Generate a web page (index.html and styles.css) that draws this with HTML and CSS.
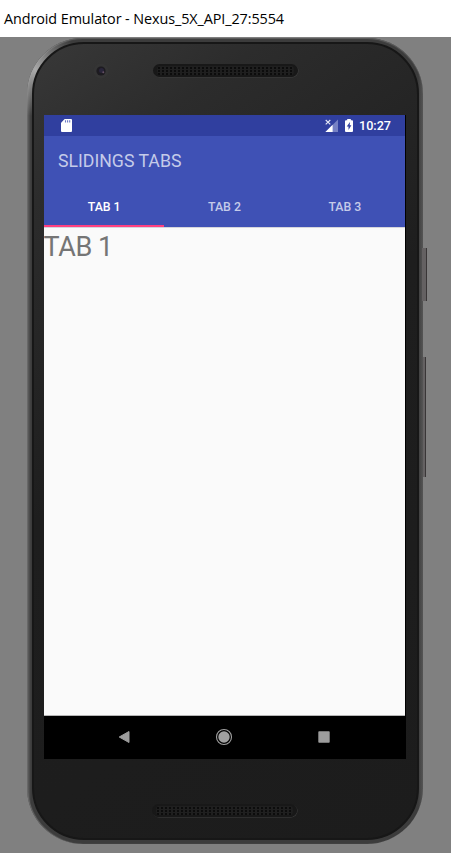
FILE: index.html
```html
<!DOCTYPE html>
<html lang="en">
<head>
<meta charset="utf-8">
<title>Android Emulator</title>
<link rel="stylesheet" href="styles.css">
</head>
<body>
<header class="titlebar"><span>Android Emulator - Nexus_5X_API_27:5554</span></header>
<main class="stage">
  <div class="phone">
    <i class="side-button power"></i>
    <i class="side-button volume"></i>
    <div class="face">
      <div class="forehead">
        <svg class="camera" width="16" height="16" viewBox="0 0 16 16"><circle cx="8" cy="8" r="7.6" fill="#353535"/><circle cx="8" cy="8" r="4.6" fill="#1d1b20"/><circle cx="8.5" cy="7.5" r="2.5" fill="#29253a"/><circle cx="10.3" cy="9.2" r="1" fill="#665064"/></svg>
        <div class="speaker"></div>
      </div>
      <div class="screen">
        <div class="status">
          <svg class="sd" width="11" height="13" viewBox="0 0 11 13"><path fill="#fff" d="M3.7 0H10a1 1 0 0 1 1 1v11a1 1 0 0 1-1 1H1a1 1 0 0 1-1-1V3.7z"/><path stroke="#6b78c4" stroke-width="1.1" d="M4.5 1.2v2.4M6.6 1.2v2.4M8.7 1.2v2.4"/></svg>
          <svg class="signal" width="13" height="13" viewBox="0 0 13 13"><path fill="#7681c4" d="M13 .5V13H7V6.5z"/><path fill="#fff" d="M7.6 5.700V13H.3z"/><path stroke="#e5e8f6" stroke-width="1.1" d="M.7 1l4.6 4.4M5.3 1L.7 5.4"/></svg>
          <svg class="battery" width="8" height="13" viewBox="0 0 8 13"><path fill="#fff" d="M2.2 0h3.6v1.2H7a1 1 0 0 1 1 1V12a1 1 0 0 1-1 1H1a1 1 0 0 1-1-1V2.200a1 1 0 0 1 1-1h1.200z"/><path fill="#303f9f" d="M5 3L1.700 7.600h1.800v3.400l2.900-4.700h-1.700z"/></svg>
          <span class="clock">10:27</span>
        </div>
        <div class="appbar">
          <h1>SLIDINGS TABS</h1>
          <nav class="tabs">
            <span class="tab active">TAB 1</span>
            <span class="tab">TAB 2</span>
            <span class="tab">TAB 3</span>
          </nav>
        </div>
        <div class="content">TAB 1</div>
        <div class="navbar">
          <svg width="12" height="14" viewBox="0 0 12 14"><path fill="#9c9c9c" stroke="#9c9c9c" stroke-linejoin="round" d="M1.200 7L11 1.500v11z"/></svg>
          <svg width="18" height="18" viewBox="0 0 18 18"><circle cx="9" cy="9" r="7.500" fill="none" stroke="#a0a0a0" stroke-width="1.100"/><circle cx="9" cy="9" r="5.700" fill="#a0a0a0"/></svg>
          <svg width="12" height="12" viewBox="0 0 12 12"><rect x=".3" y=".3" width="11.400" height="11.400" rx=".8" fill="#9c9c9c"/></svg>
        </div>
      </div>
      <div class="chin"><div class="speaker"></div></div>
    </div>
  </div>
</main>
</body>
</html>
```
FILE: styles.css
```css
* { box-sizing: border-box; }
body {
  margin: 0;
  height: 853px;
  overflow: hidden;
  background: #808080;
  font-family: Roboto, "Liberation Sans", sans-serif;
}
.titlebar {
  height: 37px;
  padding-left: 4px;
  background: #fff;
  color: #000;
  font: 14.4px/37px "Open Sans", "Noto Sans", sans-serif;
  letter-spacing: -0.09px;
  white-space: nowrap;
}
.stage { height: 816px; padding: 1px 0 0 27px; }
.phone {
  position: relative;
  width: 396px;
  height: 806px;
  padding: 4px 4px 4px 5px;
  border-radius: 56px;
  background: linear-gradient(90deg, #666 0, #3c3c3c 4px, #3c3c3c 391px, #555 396px);
  box-shadow: inset 0 1px 1px #606060, inset 1px 0 1px #6c6c6c;
}
.phone::before {
  content: "";
  position: absolute;
  inset: 0;
  border-radius: 56px;
  background: radial-gradient(circle at 8px 32px, #aaa, transparent 46px);
}
.side-button { position: absolute; background: #646162; border-right: 1px solid #393637; }
.power { left: 395px; top: 210px; width: 5px; height: 53px; }
.volume { left: 396px; top: 319px; width: 3px; height: 120px; }
.face {
  position: relative;
  height: 798px;
  padding: 0 10px;
  border: 2px solid #171717;
  border-radius: 52px;
  background: linear-gradient(145deg, #383838 0, #2c2c2c 15%, #1e1e1e 45%, #1c1c1c 100%);
}
.forehead { display: flex; height: 71px; padding: 19px 0 0 49px; }
.camera { margin-right: 44px; }
.speaker {
  width: 145px;
  height: 13px;
  margin-top: 1px;
  border: solid #181818;
  border-width: 2px 4px;
  border-radius: 7px;
  background: radial-gradient(circle at 2px 2px, #0c0c0c 0.9px, #1f1f1f 1.5px) 0 0 / 4px 3px;
  box-shadow: 0.5px 0.5px 0 #414141;
}
.screen {
  width: 362px;
  height: 644px;
  border-right: 1px solid #000;
  background: #fafafa;
}
.status {
  display: flex;
  align-items: center;
  height: 21px;
  padding: 0 14px 0 17px;
  background: #303f9f;
}
.signal { margin-left: auto; }
.battery { margin: 0 6px 0 7px; }
.clock { color: #fff; font-size: 12.6px; font-weight: 500; line-height: 21px; }
.appbar { height: 91px; background: #3f51b5; }
h1 {
  height: 50px;
  margin: 0;
  padding: 0 0 0 14px;
  color: #c5cbe9;
  font-size: 17.7px;
  font-weight: 400;
  line-height: 50px;
}
.tabs { display: grid; grid-template-columns: repeat(3, 1fr); height: 41px; }
.tab {
  height: 41px;
  color: #c5cbe9;
  font-size: 12.3px;
  font-weight: 500;
  line-height: 43px;
  text-align: center;
}
.active { color: #fff; box-shadow: inset 0 -2px #ff4081; }
.content {
  height: 489px;
  padding-top: 3px;
  border-top: 1px solid #d5d5dc;
  border-bottom: 1px solid #b5b5b5;
  color: #757575;
  font-size: 27px;
  letter-spacing: -0.4px;
  text-indent: -0.5px;
  line-height: 32px;
}
.navbar {
  display: flex;
  align-items: center;
  gap: 85px;
  height: 43px;
  padding: 0 0 2px 74px;
  background: #000;
}
.chin { padding: 44px 0 0 108px; }
```
